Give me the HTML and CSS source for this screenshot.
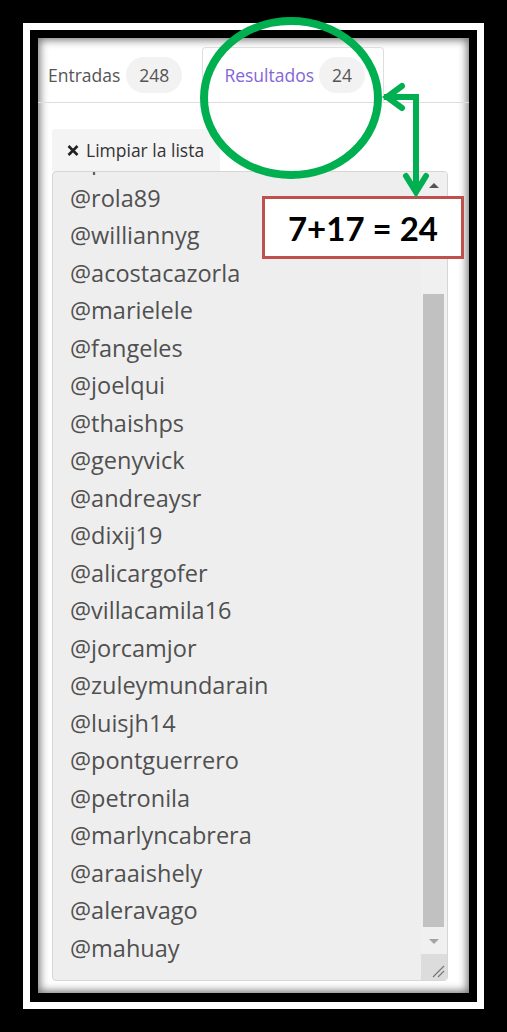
FILE: index.html
```html
<!DOCTYPE html>
<html lang="es">

<head>
    <meta charset="UTF-8">
    <meta name="viewport" content="width=device-width, initial-scale=1.0">
    <title>Resultados</title>
    <link rel="stylesheet" href="styles.css">
</head>

<body>
    <div class="frame">
        <div class="panel">
            <div class="tabs">
                <div class="tab">Entradas <span class="badge">248</span></div>
                <div class="tab active">Resultados <span class="badge">24</span></div>
            </div>
            <div class="pane">
                <div class="clear-btn">
                    <svg class="x-icon" width="12" height="11" viewBox="0 0 12 11">
                        <path d="M1.5 1 L10.5 10 M10.5 1 L1.5 10" stroke="#222" stroke-width="2.6" />
                    </svg>
                    Limpiar la lista
                </div>
                <div class="list-box">
                    <div class="names-view">
                        <ul class="names">
                            <li>@paolamv</li>
                            <li>@rola89</li>
                            <li>@williannyg</li>
                            <li>@acostacazorla</li>
                            <li>@marielele</li>
                            <li>@fangeles</li>
                            <li>@joelqui</li>
                            <li>@thaishps</li>
                            <li>@genyvick</li>
                            <li>@andreaysr</li>
                            <li>@dixij19</li>
                            <li>@alicargofer</li>
                            <li>@villacamila16</li>
                            <li>@jorcamjor</li>
                            <li>@zuleymundarain</li>
                            <li>@luisjh14</li>
                            <li>@pontguerrero</li>
                            <li>@petronila</li>
                            <li>@marlyncabrera</li>
                            <li>@araaishely</li>
                            <li>@aleravago</li>
                            <li>@mahuay</li>
                        </ul>
                    </div>
                    <div class="scrollbar">
                        <div class="sb-btn"><span class="arrow-up"></span></div>
                        <div class="sb-track">
                            <div class="sb-thumb"></div>
                        </div>
                        <div class="sb-btn"><span class="arrow-down"></span></div>
                        <div class="sb-corner">
                            <svg width="26" height="26" viewBox="0 0 26 26">
                                <path d="M12 23 L23 12 M17 23 L23 17" stroke="#777" stroke-width="1.2" />
                            </svg>
                        </div>
                    </div>
                </div>
            </div>
        </div>
    </div>

    <!-- anotaciones encima de la captura -->
    <div class="note">7+17 = 24</div>
    <svg class="marks" width="507" height="1032" viewBox="0 0 507 1032">
        <ellipse cx="291" cy="98" rx="87" ry="77" fill="none" stroke="#00b050" stroke-width="8" />
        <path d="M384 97 H416 V193" fill="none" stroke="#00b050" stroke-width="6" />
        <polyline points="402,86 387,97 402,108" fill="none" stroke="#00b050" stroke-width="6" stroke-linecap="round" />
        <polyline points="406,176 416,192 426,176" fill="none" stroke="#00b050" stroke-width="6" stroke-linecap="round" />
    </svg>
</body>

</html>
```

FILE: styles.css
```css
body {
    margin: 0;
    background: #000;
    font-family: "Open Sans", "Noto Sans", sans-serif;
}

.frame {
    margin: 23px;
    height: 986px;
    box-sizing: border-box;
    border: 7px solid #fff;
    padding: 8px 8px 9px 8px;
    background: #000;
}

.panel {
    height: 100%;
    background: #fff;
    box-shadow: inset 0 0 9px 2px rgba(0, 0, 0, 0.55);
}

.tabs {
    display: flex;
    padding-top: 9px;
    border-bottom: 1px solid #dedede;
}

.tab {
    display: flex;
    align-items: center;
    height: 55px;
    box-sizing: border-box;
    padding: 0 20px 0 10px;
    font-size: 17.5px;
    color: #555;
}

.tab.active {
    padding: 0 18px 0 21px;
    border: 1px solid #dedede;
    border-bottom: 1px solid #fff;
    margin-bottom: -1px;
    border-radius: 4px 4px 0 0;
    color: #8466d8;
}

.badge {
    margin-left: 6px;
    height: 36px;
    line-height: 36px;
    padding: 0 13px;
    border-radius: 18px;
    background: #f2f2f2;
    color: #555;
}

.tab.active .badge {
    margin-left: 5px;
}

.pane {
    padding: 26px 0 0 14px;
}

.clear-btn {
    display: inline-flex;
    align-items: center;
    height: 42px;
    padding: 0 16px 0 15px;
    background: #f4f4f4;
    border-radius: 3px 3px 0 0;
    font-size: 17.5px;
    color: #333;
}

.x-icon {
    margin-right: 7px;
}

.list-box {
    display: flex;
    width: 396px;
    height: 810px;
    box-sizing: border-box;
    border: 1px solid #d6d6d6;
    border-radius: 4px;
    background: #eeeeee;
    overflow: hidden;
}

.names-view {
    flex: 1;
    overflow: hidden;
}

.names {
    list-style: none;
    margin: -30px 0 0 0;
    padding: 0 0 0 17px;
    font-size: 23.5px;
    line-height: 37.5px;
    color: #505050;
}

.scrollbar {
    width: 26px;
    display: flex;
    flex-direction: column;
    background: #f0f0f0;
}

.sb-btn {
    height: 26px;
    display: flex;
    align-items: center;
    justify-content: center;
}

.arrow-up {
    border-left: 5px solid transparent;
    border-right: 5px solid transparent;
    border-bottom: 5px solid #555;
}

.arrow-down {
    border-left: 5px solid transparent;
    border-right: 5px solid transparent;
    border-top: 5px solid #a3a3a3;
}

.sb-track {
    flex: 1;
}

.sb-thumb {
    margin: 96px 3px 0 2px;
    height: 633px;
    background: #c1c1c1;
}

.sb-corner {
    height: 26px;
    background: #dcdcdc;
}

.sb-corner svg {
    display: block;
}

.note {
    position: absolute;
    left: 262px;
    top: 196px;
    width: 202px;
    height: 63px;
    box-sizing: border-box;
    border: 3px solid #c0504d;
    background: #fff;
    display: flex;
    align-items: center;
    justify-content: center;
    font-family: Lato, "Liberation Sans", sans-serif;
    font-weight: 700;
    font-size: 33px;
    color: #000;
}

.marks {
    position: absolute;
    left: 0;
    top: 0;
    pointer-events: none;
}
```
